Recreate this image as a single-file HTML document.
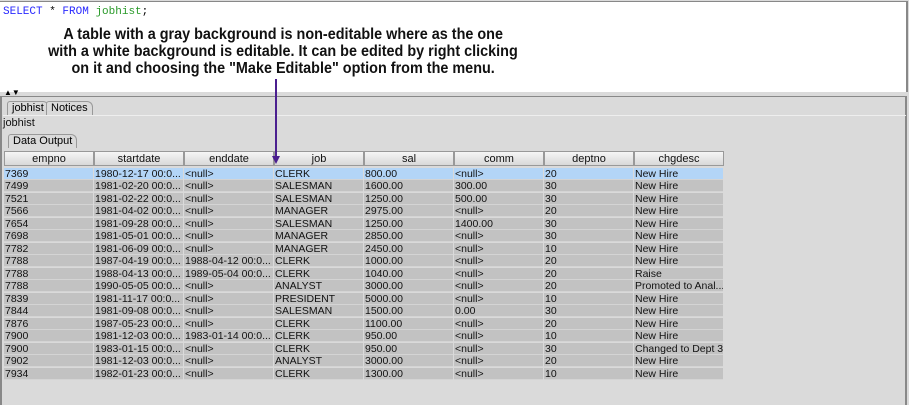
<!DOCTYPE html>
<html><head><meta charset="utf-8"><style>
body{margin:0;width:909px;height:405px;background:#dadada;position:relative;overflow:hidden;font-family:"Liberation Sans",Arial,sans-serif;}
.ed{position:absolute;left:0;top:1px;width:906px;height:90px;background:#fff;border-top:1px solid #888;border-right:2px solid #888;}
.sql{position:absolute;left:3px;top:4px;font-family:"Liberation Mono",monospace;font-size:11px;}
.call{position:absolute;left:0;top:24px;width:566px;text-align:center;font-weight:bold;font-size:16px;line-height:17px;color:#111;}
.call span{display:inline-block;transform:scaleX(0.9);white-space:nowrap;}
.lpan{position:absolute;left:0;top:96px;width:907px;height:309px;border-top:1px solid #888;border-left:2px solid #888;border-right:2px solid #888;box-sizing:border-box;}
.t{font-size:11px;color:#111;position:absolute;}
.tab{position:absolute;border:1px solid #999;border-bottom:none;border-radius:3px 6px 0 0;font-size:11px;padding:0 4px;line-height:13px;background:#dadada;}
.hd{position:absolute;top:151px;height:15px;background:linear-gradient(#f6f6f6,#d8d8d8);border:1px solid #999;box-sizing:border-box;font-size:11px;text-align:center;line-height:14px;color:#111;}
.r{position:absolute;left:4px;width:720px;height:12px;font-size:10.5px;line-height:12px;color:#111;}
.r div{position:absolute;top:0;height:12px;width:89px;background:#c2c2c2;padding-left:1px;box-sizing:border-box;white-space:nowrap;overflow:hidden;border-bottom:1px solid #d4d4d4;}
.r.s div{background:#b3d5f7;}
</style></head><body>
<div class="ed">
<div class="sql"><span style="color:#2a2aff">SELECT</span> * <span style="color:#2a2aff">FROM</span> <span style="color:#2a9a2a">jobhist</span>;</div>
<div class="call"><span>A table with a gray background is non-editable where as the one</span><br><span>with a white background is editable. It can be edited by right clicking</span><br><span>on it and choosing the "Make Editable" option from the menu.</span></div>
</div>
<div style="position:absolute;left:4px;top:89px;font-size:8px;line-height:8px">▲▼</div>
<div class="lpan"></div>
<div style="position:absolute;left:3px;top:115px;width:903px;border-top:1px solid #eee"></div>
<div class="tab" style="left:7px;top:101px;">jobhist</div>
<div class="tab" style="left:46px;top:101px;">Notices</div>
<div class="t" style="left:3px;top:117px">jobhist</div>
<div class="tab" style="left:8px;top:134px;">Data Output</div>
<div class="hd" style="left:4px;width:90px">empno</div>
<div class="hd" style="left:94px;width:90px">startdate</div>
<div class="hd" style="left:184px;width:90px">enddate</div>
<div class="hd" style="left:274px;width:90px">job</div>
<div class="hd" style="left:364px;width:90px">sal</div>
<div class="hd" style="left:454px;width:90px">comm</div>
<div class="hd" style="left:544px;width:90px">deptno</div>
<div class="hd" style="left:634px;width:90px">chgdesc</div>
<div id="rows"></div>
<script>
var d=[
["7369","1980-12-17 00:0...","<null>","CLERK","800.00","<null>","20","New Hire"],
["7499","1981-02-20 00:0...","<null>","SALESMAN","1600.00","300.00","30","New Hire"],
["7521","1981-02-22 00:0...","<null>","SALESMAN","1250.00","500.00","30","New Hire"],
["7566","1981-04-02 00:0...","<null>","MANAGER","2975.00","<null>","20","New Hire"],
["7654","1981-09-28 00:0...","<null>","SALESMAN","1250.00","1400.00","30","New Hire"],
["7698","1981-05-01 00:0...","<null>","MANAGER","2850.00","<null>","30","New Hire"],
["7782","1981-06-09 00:0...","<null>","MANAGER","2450.00","<null>","10","New Hire"],
["7788","1987-04-19 00:0...","1988-04-12 00:0...","CLERK","1000.00","<null>","20","New Hire"],
["7788","1988-04-13 00:0...","1989-05-04 00:0...","CLERK","1040.00","<null>","20","Raise"],
["7788","1990-05-05 00:0...","<null>","ANALYST","3000.00","<null>","20","Promoted to Anal..."],
["7839","1981-11-17 00:0...","<null>","PRESIDENT","5000.00","<null>","10","New Hire"],
["7844","1981-09-08 00:0...","<null>","SALESMAN","1500.00","0.00","30","New Hire"],
["7876","1987-05-23 00:0...","<null>","CLERK","1100.00","<null>","20","New Hire"],
["7900","1981-12-03 00:0...","1983-01-14 00:0...","CLERK","950.00","<null>","10","New Hire"],
["7900","1983-01-15 00:0...","<null>","CLERK","950.00","<null>","30","Changed to Dept 30"],
["7902","1981-12-03 00:0...","<null>","ANALYST","3000.00","<null>","20","New Hire"],
["7934","1982-01-23 00:0...","<null>","CLERK","1300.00","<null>","10","New Hire"]];
var h="";
d.forEach(function(r,i){h+='<div class="r'+(i==0?' s':'')+'" style="top:'+Math.round(167.5+i*12.5)+'px">';
r.forEach(function(c,j){h+='<div style="left:'+(j*90)+'px">'+c.replace(/</g,"&lt;")+'</div>';});h+='</div>';});
document.getElementById("rows").innerHTML=h;
</script>
<svg style="position:absolute;left:0;top:0" width="909" height="405"><line x1="276" y1="79" x2="276" y2="157" stroke="#4b1f8f" stroke-width="2"/><polygon points="272,156 280,156 276,164" fill="#4b1f8f"/></svg>
</body></html>
